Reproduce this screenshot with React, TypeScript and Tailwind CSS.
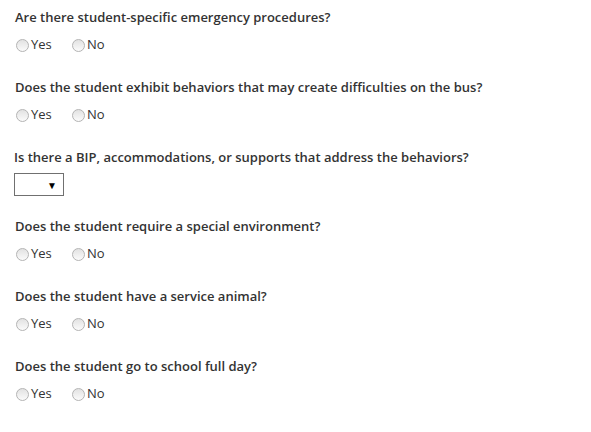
import React from 'react';

const radioQuestions: { id: string; label: string }[] = [
  { id: 'emergency', label: 'Are there student-specific emergency procedures?' },
  { id: 'behaviors', label: 'Does the student exhibit behaviors that may create difficulties on the bus?' },
];

const moreQuestions: { id: string; label: string }[] = [
  { id: 'environment', label: 'Does the student require a special environment?' },
  { id: 'animal', label: 'Does the student have a service animal?' },
  { id: 'fullDay', label: 'Does the student go to school full day?' },
];

const YesNo = ({ name }: { name: string }) => (
  <div className="flex items-center h-[20px] mt-[9px]">
    {['Yes', 'No'].map((opt) => (
      <label key={opt} className="flex items-center mr-[16px] text-[13px] text-[#333]">
        <input
          type="radio"
          name={name}
          className="appearance-none w-[13px] h-[13px] rounded-full border border-[#b4b4b4] bg-gradient-to-b from-[#e2e2e2] to-[#fbfbfb] ml-[1px] mr-[2px]"
        />
        <span className="w-[24px]">{opt}</span>
      </label>
    ))}
  </div>
);

const Question = ({ id, label }: { id: string; label: string }) => (
  <div className="mb-[23px]">
    <p className="text-[13px] font-semibold text-[#333] leading-[18px]">{label}</p>
    <YesNo name={id} />
  </div>
);

export default function App() {
  return (
    <div className="w-[591px] h-[432px] bg-white pt-[8px] px-[15px]" style={{ fontFamily: '"Open Sans", Arial, sans-serif' }}>
      {radioQuestions.map((q) => (
        <Question key={q.id} {...q} />
      ))}

      <div className="mb-[21px] -ml-[1px]">
        <p className="text-[13px] font-semibold text-[#333] leading-[18px]">
          Is there a BIP, accommodations, or supports that address the behaviors?
        </p>
        <div className="mt-[7px] w-[50px] h-[23px] border border-[#707070] flex items-center justify-end pr-[6px]">
          <span className="text-[10px] text-black leading-none">▼</span>
        </div>
      </div>

      {moreQuestions.map((q) => (
        <Question key={q.id} {...q} />
      ))}
    </div>
  );
}
